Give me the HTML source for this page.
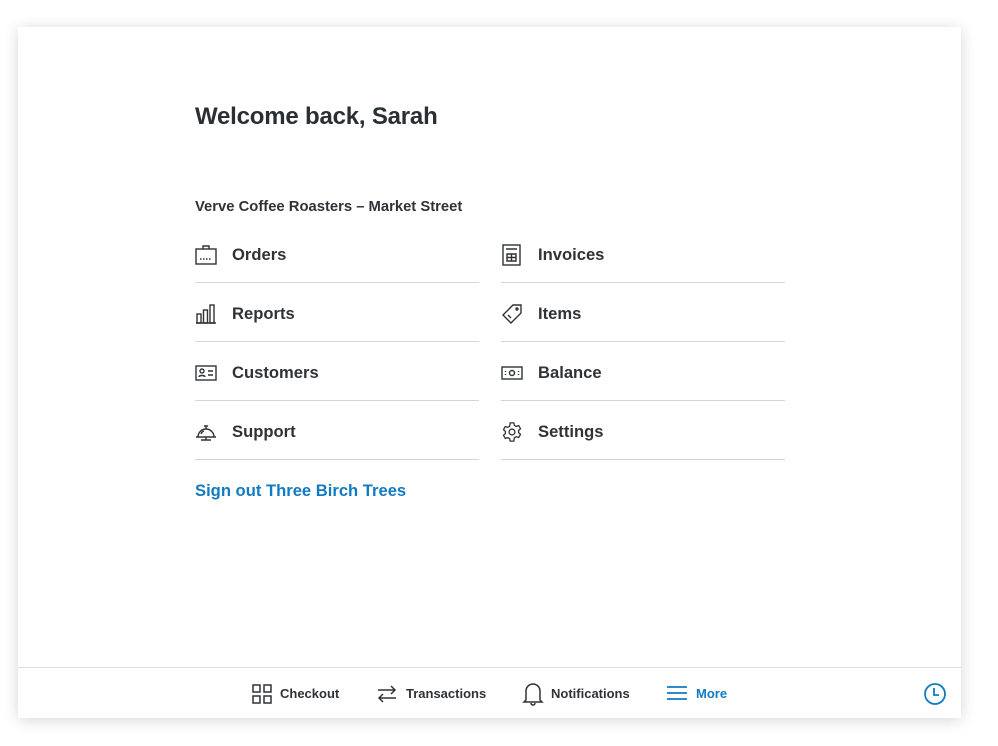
<!DOCTYPE html>
<html><head><style>
*{margin:0;padding:0;box-sizing:border-box}
body{width:998px;height:746px;background:#fff;font-family:"Liberation Sans",sans-serif;color:#262b30;position:relative;overflow:hidden}
.card{position:absolute;left:18px;top:27px;width:943px;height:691px;background:#fff;box-shadow:0 2px 14px rgba(0,0,0,.16)}
.t{position:absolute;white-space:nowrap}
h1{position:absolute;left:195px;top:103px;font-size:24px;font-weight:bold;color:#2a2f34;letter-spacing:-.2px}
.sub{left:195px;top:199px;font-size:14.8px;font-weight:bold;color:#2f3337}
.row{position:absolute;width:284px;height:59px;border-bottom:1px solid #d2d4d6}
.row svg{position:absolute;left:0;top:20px}
.row span{position:absolute;left:37px;top:21px;font-size:16.6px;font-weight:bold;color:#2f3337}
.so{left:195px;top:481px;font-size:16.6px;font-weight:bold;color:#117bc2}
.bar{position:absolute;left:18px;top:667px;width:943px;height:51px;border-top:1px solid #dcdcdc}
.bi{position:absolute;top:18px;font-size:13px;font-weight:bold;color:#2f3337}
.bar svg{position:absolute}
</style></head><body>
<div class="card"></div>
<h1>Welcome back, Sarah</h1>
<div class="t sub">Verve Coffee Roasters – Market Street</div>

<div class="row" style="left:195px;top:224px"><svg width="22" height="22" viewBox="0 0 22 22" fill="none" stroke="#2f3337" stroke-width="1.4"><rect x="1" y="5" width="20" height="15"/><path d="M8 5V2h6v3"/><path d="M5 15h12" stroke-dasharray="1.5 1.5"/></svg><span>Orders</span></div>
<div class="row" style="left:195px;top:283px"><svg width="22" height="22" viewBox="0 0 22 22" fill="none" stroke="#2f3337" stroke-width="1.4"><path d="M1 20h20"/><rect x="2" y="11" width="4" height="9"/><rect x="8.5" y="7" width="4" height="13"/><rect x="15" y="2" width="4" height="18"/></svg><span>Reports</span></div>
<div class="row" style="left:195px;top:342px"><svg width="22" height="22" viewBox="0 0 22 22" fill="none" stroke="#2f3337" stroke-width="1.4"><rect x="1" y="4" width="20" height="14"/><circle cx="7" cy="9" r="2"/><path d="M4 15c0-2 6-2 6 0M13 9h5M13 13h5"/></svg><span>Customers</span></div>
<div class="row" style="left:195px;top:401px"><svg width="22" height="22" viewBox="0 0 22 22" fill="none" stroke="#2f3337" stroke-width="1.4"><path d="M3 16a8 8 0 0 1 16 0zM1 16h20M9 5h4M11 5v3M11 16v3M6 19h10M6 13a5 5 0 0 1 3-3"/></svg><span>Support</span></div>

<div class="row" style="left:501px;top:224px"><svg width="22" height="22" viewBox="0 0 22 22" fill="none" stroke="#2f3337" stroke-width="1.4"><rect x="2" y="1" width="17" height="20"/><path d="M5 5h11M6 10h9v7H6zM6 13.5h9M10.5 10v7"/></svg><span>Invoices</span></div>
<div class="row" style="left:501px;top:283px"><svg width="22" height="22" viewBox="0 0 22 22" fill="none" stroke="#2f3337" stroke-width="1.4"><path d="M12 2h8v8l-10 10-8-8zM7 12l3 3"/><circle cx="16" cy="6" r="1"/></svg><span>Items</span></div>
<div class="row" style="left:501px;top:342px"><svg width="22" height="22" viewBox="0 0 22 22" fill="none" stroke="#2f3337" stroke-width="1.4"><rect x="1" y="5" width="20" height="12"/><circle cx="11" cy="11" r="2.5"/><path d="M4.5 9v1M4.5 12v1M17.5 9v1M17.5 12v1"/></svg><span>Balance</span></div>
<div class="row" style="left:501px;top:401px"><svg width="22" height="22" viewBox="0 0 24 24" fill="none" stroke="#2f3337" stroke-width="1.4"><circle cx="12" cy="12" r="3.2"/><path d="M10 2h4l.6 2.8 2 1.1 2.7-.9 2 3.4-2.1 1.9v2.4l2.1 1.9-2 3.4-2.7-.9-2 1.1L14 22h-4l-.6-2.8-2-1.1-2.7.9-2-3.4 2.1-1.9v-2.4L2.7 9.4l2-3.4 2.7.9 2-1.1z"/></svg><span>Settings</span></div>

<div class="t so">Sign out Three Birch Trees</div>

<div class="bar">
<svg style="left:234px;top:16px" width="20" height="20" viewBox="0 0 20 20" fill="none" stroke="#2f3337" stroke-width="1.5"><rect x="1" y="1" width="7" height="7"/><rect x="12" y="1" width="7" height="7"/><rect x="1" y="12" width="7" height="7"/><rect x="12" y="12" width="7" height="7"/></svg>
<div class="bi" style="left:262px">Checkout</div>
<svg style="left:358px;top:15px" width="22" height="22" viewBox="0 0 22 22" fill="none" stroke="#2f3337" stroke-width="1.5"><path d="M2 7h17M15 3l4 4-4 4M20 15H3M7 11l-4 4 4 4"/></svg>
<div class="bi" style="left:388px">Transactions</div>
<svg style="left:504px;top:14px" width="22" height="24" viewBox="0 0 22 24" fill="none" stroke="#2f3337" stroke-width="1.5"><path d="M4 18V9a7 7 0 0 1 14 0v9l2 2H2zM9 21a2 2 0 0 0 4 0"/></svg>
<div class="bi" style="left:533px">Notifications</div>
<svg style="left:649px;top:17px" width="20" height="16" viewBox="0 0 20 16" fill="none" stroke="#117bc2" stroke-width="1.8"><path d="M0 2h20M0 8h20M0 14h20"/></svg>
<div class="bi" style="left:678px;color:#117bc2">More</div>
<svg style="left:905px;top:14px" width="24" height="24" viewBox="0 0 24 24" fill="none" stroke="#117bc2" stroke-width="1.8"><circle cx="12" cy="12" r="10"/><path d="M11 6v7h5"/></svg>
</div>
</body></html>
